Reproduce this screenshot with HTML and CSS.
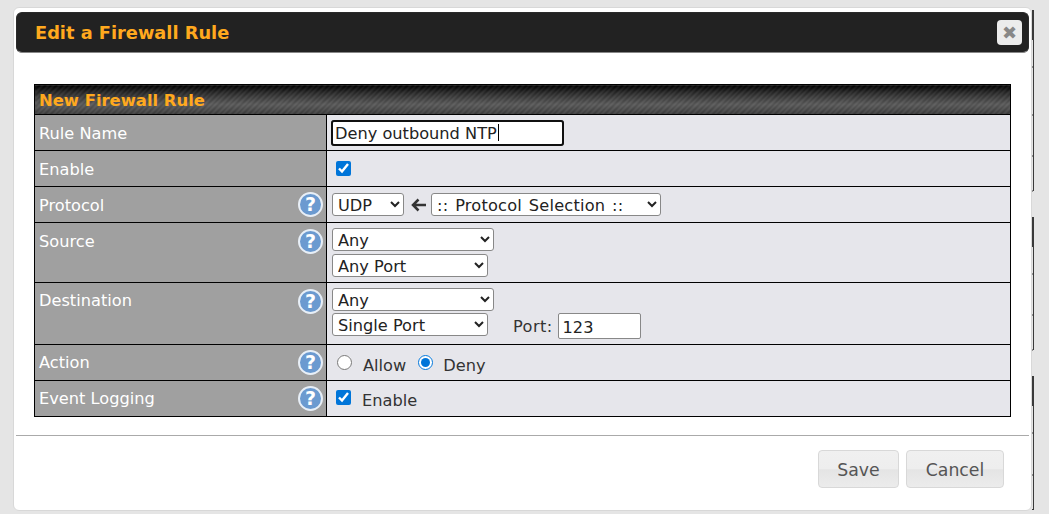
FILE: index.html
```html
<!DOCTYPE html>
<html lang="en">
<head>
<meta charset="utf-8">
<title>Edit a Firewall Rule</title>
<link rel="stylesheet" href="styles.css">
</head>
<body>
<svg class="backdrop-edge" width="3" height="514" viewBox="0 0 3 514">
  <path class="thin" d="M1.500 10V191M1.500 217V350M1.500 376V510M0 67H1M0 115H1M0 156H1M0 191H1M0 274H1M0 315H1M0 350H1M0 433H1M0 475H1M0 509.500H1"/>
  <path class="thick" d="M1 10V40M1 217V247M1 376V406"/>
</svg>
<div class="modal">
  <header class="modal-head">
    <h1>Edit a Firewall Rule</h1>
    <button class="close" type="button" aria-label="Close">&#10006;</button>
  </header>
  <div class="modal-body">
    <table class="form">
      <colgroup><col class="col-label"><col></colgroup>
      <thead>
        <tr><th colspan="2" class="section">New Firewall Rule</th></tr>
      </thead>
      <tbody>
        <tr class="h36">
          <th class="plain">Rule Name</th>
          <td>
            <div class="name-wrap">
              <input id="name" class="text name" type="text" value="Deny outbound NTP">
              <span class="caret"></span>
            </div>
          </td>
        </tr>
        <tr class="h36">
          <th class="plain">Enable</th>
          <td><input class="check" type="checkbox" checked></td>
        </tr>
        <tr class="h36">
          <th><div class="lab"><span class="down">Protocol</span><span class="help">?</span></div></th>
          <td>
            <div class="line">
              <select class="w72"><option>UDP</option></select>
              <svg class="arrow" width="16" height="14" viewBox="0 0 16 14"><path d="M7.500 1.500 2 7l5.500 5.500M2.500 7H15" fill="none" stroke="#333" stroke-width="2.500"/></svg>
              <select class="w230"><option>:: Protocol Selection ::</option></select>
            </div>
          </td>
        </tr>
        <tr class="h60">
          <th><div class="lab"><span>Source</span><span class="help">?</span></div></th>
          <td>
            <div class="line"><select class="w162"><option>Any</option></select></div>
            <div class="line next"><select class="w156"><option>Any Port</option></select></div>
          </td>
        </tr>
        <tr class="h62">
          <th><div class="lab"><span class="up">Destination</span><span class="help">?</span></div></th>
          <td>
            <div class="line"><select class="w162"><option>Any</option></select></div>
            <div class="line next">
              <select class="w156"><option>Single Port</option></select>
              <span class="port">Port:</span>
              <input class="text num" type="text" value="123">
            </div>
          </td>
        </tr>
        <tr class="h36">
          <th><div class="lab"><span>Action</span><span class="help">?</span></div></th>
          <td>
            <div class="choices">
              <input class="radio" type="radio" name="a"><label>Allow</label>
              <input class="radio second" type="radio" name="a" checked><label>Deny</label>
            </div>
          </td>
        </tr>
        <tr class="h36">
          <th><div class="lab"><span>Event Logging</span><span class="help">?</span></div></th>
          <td>
            <div class="choices"><input class="check" type="checkbox" checked><label class="en">Enable</label></div>
          </td>
        </tr>
      </tbody>
    </table>
  </div>
  <footer class="modal-foot">
    <button class="btn save" type="button">Save</button>
    <button class="btn cancel" type="button">Cancel</button>
  </footer>
</div>
<script src="script.js"></script>
</body>
</html>
```
FILE: styles.css
```css
* { box-sizing: border-box; }
html, body { margin: 0; height: 100%; overflow: hidden; }
body {
  background: #e5e5e5;
  font-family: "DejaVu Sans", Verdana, sans-serif;
  font-size: 16.2px;
  color: #333;
  padding: 7px 0 0 13px;
  position: relative;
}
.backdrop-edge { position: absolute; left: 1032px; top: 0; }
.thin { fill: none; stroke: #3a3a3a; stroke-width: 1; }
.thick { fill: none; stroke: #3a3a3a; stroke-width: 2; }
.modal {
  position: relative;
  width: 1019px;
  height: 504px;
  background: #fff;
  border: 1px solid #d8d8d8;
  border-radius: 6px;
  padding: 4px 2px 0;
  display: flex;
  flex-direction: column;
}
.modal-head {
  height: 41px;
  background: #222;
  border: 1px solid #2a2a2a;
  border-bottom: 1px solid #888;
  border-radius: 6px;
  display: flex;
  align-items: center;
  justify-content: space-between;
  padding: 0 6px 0 18px;
  flex: none;
}
.modal-head h1 {
  margin: 0;
  font-size: 17.8px;
  font-weight: bold;
  color: #ffa91e;
}
.close {
  width: 25px;
  height: 25px;
  padding: 0;
  border: 0;
  border-radius: 4px;
  background: #ececec;
  color: #888;
  font: 18px "DejaVu Sans", sans-serif;
  line-height: 25px;
  text-align: center;
}
.modal-body { padding: 31px 18px 0; flex: none; }
.form {
  border-collapse: collapse;
  width: 977px;
  table-layout: fixed;
}
.col-label { width: 292px; }
.form th, .form td { border: 1px solid #000; padding: 0; }
.form tbody th {
  background: #a0a0a0;
  color: #fff;
  font-weight: normal;
  text-align: left;
  padding: 0 4px;
}
.form tbody th.plain { padding-top: 2px; }
.form td { background: #e6e6eb; padding-left: 4px; }
.form .section {
  height: 30px;
  padding: 2px 3px 0 4px;
  text-align: left;
  color: #ffa91e;
  font-size: 16.4px;
  font-weight: bold;
  background:
    repeating-linear-gradient(135deg, rgba(255,255,255,.06) 0 2px, rgba(0,0,0,.06) 2px 4px),
    linear-gradient(#000 0, #2a2a2a 25%, #5a5a5a 65%, #3c3c3c 100%);
}
.h36 { height: 36px; }
.h60 { height: 60px; }
.h62 { height: 62px; }
.lab { display: flex; align-items: center; justify-content: space-between; margin-right: -1px; }
.down { margin-top: 2px; }
.up { margin-top: -2px; }
.form tbody tr.h60 th, .form tbody tr.h62 th { vertical-align: top; padding-top: 6px; }
.form tbody tr.h60 td, .form tbody tr.h62 td { vertical-align: top; padding-top: 5px; }
.help {
  width: 25px;
  height: 25px;
  flex: none;
  border-radius: 50%;
  border: 2px solid #e8eff7;
  background: #6b9ad0;
  color: #fff;
  font: bold 19px/21px "DejaVu Sans", sans-serif;
  text-align: center;
}
.line { display: flex; align-items: center; height: 23px; }
.next { margin-top: 3px; }
.h62 .next { margin-top: 2px; }
select {
  height: 23px;
  font: 16.200px "DejaVu Sans", sans-serif;
  color: #222;
  background: #fff;
  border: 1px solid #888;
  border-radius: 3px;
  padding: 1px 0 0 1px;
  margin: 0;
  flex: none;
}
.w72 { width: 72px; margin-left: 1px; }
.w230 { width: 230px; letter-spacing: .2px; word-spacing: 1.500px; }
.w162 { width: 162px; margin-left: 1px; }
.w156 { width: 156px; margin-left: 1px; }
.arrow { margin: 0 4px 0 7px; flex: none; }
.text {
  font: 16.200px "DejaVu Sans", sans-serif;
  color: #222;
  background: #fff;
  border: 1px solid #888;
  border-radius: 2px;
  padding: 2px 4px 0;
  margin: 0;
}
.name-wrap { position: relative; width: 233px; }
.name { width: 233px; height: 26px; display: block; padding-left: 3px; caret-color: transparent; }
.name:focus { outline: 2px solid #101010; outline-offset: -2px; border-radius: 3px; }
.caret { position: absolute; left: 167px; top: 4px; width: 1px; height: 17px; background: #000; }
.num { width: 83px; height: 26px; margin-top: 3px; }
.port { margin: 4px 5px 0 25px; letter-spacing: .4px; }
.check {
  width: 15px;
  height: 15px;
  margin: 0 0 0 5px;
  accent-color: #0075d9;
  display: block;
}
.radio { width: 15px; height: 15px; margin: 0 0 0 6px; accent-color: #0075d9; }
.radio.second { margin-left: 12px; }
.choices { display: flex; align-items: center; }
.choices label { margin: 5px 0 0 11px; }
.choices .second + label { margin-left: 10px; }
.choices .en { margin: 3px 0 0 11px; }
.choices .radio { margin-top: -1px; }
.choices .check { margin-top: -3px; }
.modal-foot {
  margin-top: 18px;
  border-top: 1px solid #aaa;
  flex: 1;
  display: flex;
  justify-content: flex-end;
  align-items: flex-start;
  gap: 7px;
  padding: 14px 25px 0 0;
}
.btn {
  height: 38px;
  border: 1px solid #d8d8d8;
  border-radius: 4px;
  background: linear-gradient(#f0f0f0 0, #eeeeee 50%, #e4e4e4 52%, #ececec 100%);
  color: #555;
  font: 17.300px "DejaVu Sans", sans-serif;
  padding: 2px 0 0;
}
.save { width: 81px; }
.cancel { width: 98px; }
```
FILE: script.js
```js
var field = document.getElementById('name');
field.focus();
field.setSelectionRange(field.value.length, field.value.length);
```
